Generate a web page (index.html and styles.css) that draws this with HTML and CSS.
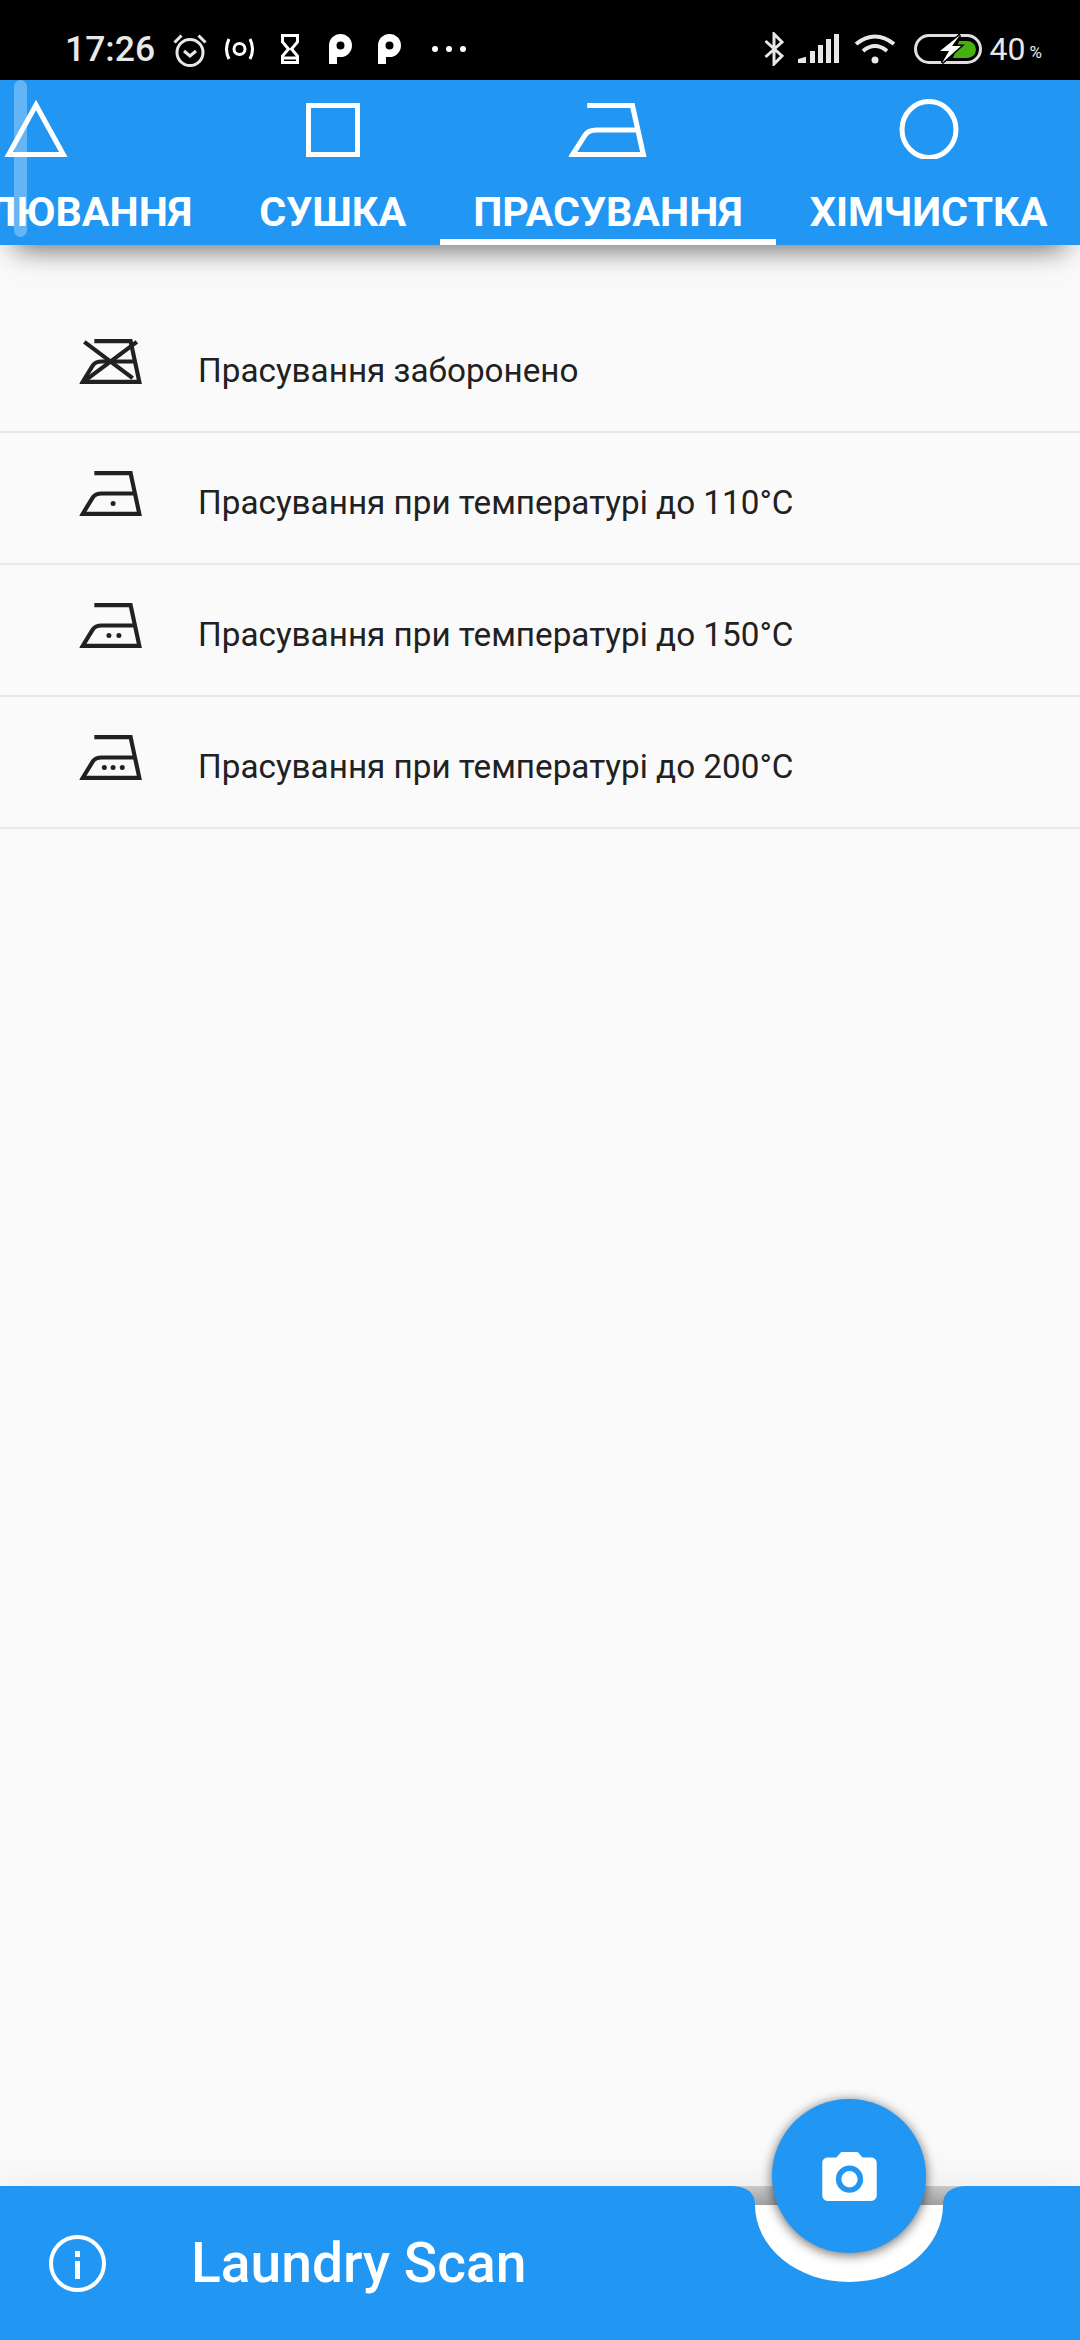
FILE: index.html
```html
<!DOCTYPE html>
<html lang="uk">
<head>
  <meta charset="UTF-8"/>
  <meta name="viewport" content="width=device-width, initial-scale=1.0"/>
  <title>Laundry Scan</title>
  <link rel="stylesheet" href="styles.css">
</head>
<body>
  <svg class="defs" width="0" height="0">
    <symbol id="iron" viewBox="0 0 76 54" preserveAspectRatio="none">
      <path d="M18 2.5H61.5L72 51.5H4L16 32Q19 27 27 27H67" fill="none" stroke="currentColor" stroke-width="5"/>
    </symbol>
  </svg>
  <div class="app">
    <div class="statusbar">
      <div class="status-left">
        <span class="time">17:26</span>
        <svg class="st-alarm" viewBox="0 0 34 34" fill="none" stroke="#e8e8e8" stroke-width="3">
          <circle cx="17" cy="19.5" r="13"/>
          <path d="M11 18l6 5 6-5M1.5 9.5L8.5 2.5M25.5 2.5L32.5 9.5"/>
        </svg>
        <svg class="st-cast" viewBox="0 0 29 22" fill="none" stroke="#fff" stroke-width="3">
          <circle cx="14.500" cy="11" r="5.500"/>
          <path d="M4 1Q-1 11 4 21M25 1Q30 11 25 21"/>
        </svg>
        <svg class="st-glass" viewBox="0 0 18 30" fill="none" stroke="#fff" stroke-width="3">
          <path d="M1.500 1.500H16.500V8L10.500 15L16.500 22V28.500H1.500V22L7.500 15L1.500 8ZM1.500 24H16.500"/>
        </svg>
        <svg class="st-p" viewBox="0 0 23 30" fill="#fff">
          <path d="M0 30V11.500A11.500 11.500 0 1 1 11.500 23H8V30ZM11.500 7.500A4 4 0 1 0 11.500 15.500A4 4 0 1 0 11.500 7.500Z" fill-rule="evenodd"/>
        </svg>
        <svg class="st-p st-p2" viewBox="0 0 23 30" fill="#fff">
          <path d="M0 30V11.500A11.500 11.500 0 1 1 11.500 23H8V30ZM11.500 7.500A4 4 0 1 0 11.500 15.500A4 4 0 1 0 11.500 7.500Z" fill-rule="evenodd"/>
        </svg>
        <svg class="st-dots" viewBox="0 0 34 6" fill="#fff">
          <circle cx="3" cy="3" r="3"/>
          <circle cx="17" cy="3" r="3"/>
          <circle cx="31" cy="3" r="3"/>
        </svg>
      </div>
      <div class="status-right">
        <svg class="st-bt" viewBox="0 0 20 34" fill="none" stroke="#e8e8e8" stroke-width="3">
          <path d="M1.500 9L18 24L10 32V2L18 10L1.500 25"/>
        </svg>
        <svg class="st-signal" viewBox="0 0 41 29" fill="#e8e8e8">
          <path d="M0 29V25L8 22.700V29Z"/>
          <rect x="12" y="17" width="5" height="12"/>
          <rect x="20" y="11" width="5" height="18"/>
          <rect x="28" y="5" width="5" height="24"/>
          <rect x="36" y="0" width="5" height="29"/>
        </svg>
        <svg class="st-wifi" viewBox="0 0 42 30" fill="none" stroke="#e8e8e8" stroke-width="4">
          <path d="M2 10Q21 -5 40 10M9 17Q21 7 33 17"/>
          <circle cx="21" cy="26" r="3.500" fill="#e8e8e8" stroke="none"/>
        </svg>
        <svg class="st-batt" viewBox="0 0 68 30">
          <rect x="1.500" y="1.500" width="65" height="27" rx="13.500" fill="none" stroke="#e0e0e0" stroke-width="3"/>
          <path d="M45 7H53.500A8.500 8.500 0 0 1 53.500 24H39Z" fill="#46b010"/>
          <path d="M46 1L26 17H35L28 29L47 12H38Z" fill="#fff" stroke="#000" stroke-width="3" paint-order="stroke"/>
        </svg>
        <span class="batt-num">40</span>
        <span class="batt-pct">%</span>
      </div>
    </div>

    <div class="tabbar">
      <div class="tabs">
        <div class="tab">
          <svg class="tab-icon" viewBox="0 0 100 60" fill="none" stroke="#fff" stroke-width="5">
            <path d="M50 6L77.300 55.500H22.700Z"/>
          </svg>
          <span class="tab-label">Відбілювання</span>
        </div>
        <div class="tab">
          <svg class="tab-icon" viewBox="0 0 100 60" fill="none" stroke="#fff" stroke-width="5">
            <rect x="25.500" y="6.500" width="49" height="49"/>
          </svg>
          <span class="tab-label">Сушка</span>
        </div>
        <div class="tab active">
          <svg class="tab-icon" viewBox="0 0 100 60">
            <use href="#iron" x="10.500" y="4" width="79" height="54"/>
          </svg>
          <span class="tab-label">Прасування</span>
        </div>
        <div class="tab">
          <svg class="tab-icon" viewBox="0 0 100 60" fill="none" stroke="#fff" stroke-width="5">
            <ellipse cx="50" cy="30.500" rx="27" ry="28"/>
          </svg>
          <span class="tab-label">Хімчистка</span>
        </div>
      </div>
      <div class="scroll-thumb"></div>
    </div>

    <ul class="list">
      <li class="row">
        <svg class="row-icon" viewBox="0 0 76 54">
          <use href="#iron" width="76" height="54"/>
          <path d="M6 3.500L64 47M69 3.500L8 49" stroke="currentColor" stroke-width="5" fill="none"/>
        </svg>
        <span class="row-text">Прасування заборонено</span>
      </li>
      <li class="row">
        <svg class="row-icon" viewBox="0 0 76 54">
          <use href="#iron" width="76" height="54"/>
          <circle cx="40.500" cy="39" r="3" fill="currentColor"/>
        </svg>
        <span class="row-text">Прасування при температурі до 110°C</span>
      </li>
      <li class="row">
        <svg class="row-icon" viewBox="0 0 76 54">
          <use href="#iron" width="76" height="54"/>
          <circle cx="35.500" cy="39" r="3" fill="currentColor"/>
          <circle cx="47.500" cy="39" r="3" fill="currentColor"/>
        </svg>
        <span class="row-text">Прасування при температурі до 150°C</span>
      </li>
      <li class="row">
        <svg class="row-icon" viewBox="0 0 76 54">
          <use href="#iron" width="76" height="54"/>
          <circle cx="30" cy="39" r="3" fill="currentColor"/>
          <circle cx="40.500" cy="39" r="3" fill="currentColor"/>
          <circle cx="51.500" cy="39" r="3" fill="currentColor"/>
        </svg>
        <span class="row-text">Прасування при температурі до 200°C</span>
      </li>
    </ul>

    <div class="bottombar">
      <svg class="info-icon" viewBox="0 0 57 57" fill="none" stroke="#fff">
        <circle cx="28.500" cy="28.500" r="26.500" stroke-width="4"/>
        <path d="M28.500 26V44" stroke-width="5"/>
        <path d="M28.500 16V22" stroke-width="5"/>
      </svg>
      <span class="app-name">Laundry Scan</span>
      <svg class="notch" viewBox="0 0 260 110">
        <defs>
          <linearGradient id="notch-shade" x1="0" y1="0" x2="0" y2="1">
            <stop offset="0" stop-color="#c8c8c8"/>
            <stop offset="1" stop-color="#a0a0a0"/>
          </linearGradient>
        </defs>
        <path d="M10 0Q35 0 35 19H223Q223 0 248 0Z" fill="url(#notch-shade)"/>
        <path d="M35 19A94 77 0 0 0 223 19Z" fill="#fff"/>
      </svg>
      <button class="fab">
        <svg class="fab-icon" viewBox="2 2 20 18">
          <path d="M9 2L7.170 4H4C2.900 4 2 4.900 2 6V18C2 19.100 2.900 20 4 20H20C21.100 20 22 19.100 22 18V6C22 4.900 21.100 4 20 4H16.830L15 2Z" fill="#fff"/>
          <circle cx="12" cy="12" r="4" fill="#fff" stroke="#2196f3" stroke-width="2"/>
        </svg>
      </button>
    </div>
  </div>
</body>
</html>
```
FILE: styles.css
```css
* {
  margin: 0;
  padding: 0;
  box-sizing: border-box;
}
body {
  width: 1080px;
  height: 2340px;
  overflow: hidden;
  background: #fafafa;
  font-family: Roboto, sans-serif;
  color: #212121;
}
.defs {
  display: block;
  height: 0;
}
.app {
  height: 2340px;
  display: flex;
  flex-direction: column;
}
.statusbar {
  height: 80px;
  flex: none;
  background: #000;
  display: flex;
  justify-content: space-between;
  padding: 0 38px 0 65px;
}
.status-left,
.status-right {
  display: flex;
  align-items: flex-start;
}
.status-left svg,
.status-right svg {
  flex: none;
  display: block;
}
.time {
  font-size: 35.5px;
  font-weight: 500;
  line-height: 40px;
  margin-top: 29px;
  color: #e8e8e8;
}
.st-alarm { width: 34px; height: 34px; margin: 33px 0 0 18px; }
.st-cast { width: 29px; height: 22px; margin: 38px 0 0 18px; }
.st-glass { width: 18px; height: 30px; margin: 34px 0 0 27px; }
.st-p { width: 23px; height: 30px; margin: 34px 0 0 30px; }
.status-left .st-p2 { margin-left: 26px; }
.st-dots { width: 34px; height: 6px; margin: 46px 0 0 31px; }
.st-bt { width: 20px; height: 34px; margin-top: 32px; }
.st-signal { width: 41px; height: 29px; margin: 34px 0 0 14px; }
.st-wifi { width: 42px; height: 30px; margin: 34px 0 0 15px; }
.st-batt { width: 68px; height: 30px; margin: 34px 0 0 18px; }
.batt-num {
  font-size: 32px;
  line-height: 38px;
  margin: 30px 0 0 8px;
  color: #e8e8e8;
}
.batt-pct {
  font-size: 17px;
  line-height: 20px;
  margin: 42px 0 0 4px;
  color: #e8e8e8;
}
.tabbar {
  height: 165px;
  flex: none;
  position: relative;
  background: #2196f3;
  box-shadow: 0 20px 26px -16px rgba(0, 0, 0, 0.55), 0 4px 30px rgba(0, 0, 0, 0.05);
  z-index: 2;
}
.tabs {
  display: flex;
  height: 165px;
  margin-left: -154px;
}
.tab {
  flex: none;
  display: flex;
  flex-direction: column;
  align-items: center;
  height: 165px;
  padding: 19px 33.5px 0;
  border-bottom: 6px solid transparent;
  color: #fff;
}
.tab.active {
  border-bottom-color: #fff;
}
.tab-icon {
  width: 100px;
  height: 60px;
  flex: none;
  margin-bottom: 29px;
}
.tab-label {
  font-size: 41.25px;
  font-weight: 700;
  line-height: 48px;
  text-transform: uppercase;
  white-space: nowrap;
}
.scroll-thumb {
  position: absolute;
  left: 14px;
  top: 0;
  width: 13px;
  height: 157px;
  border-radius: 7px;
  background: rgba(255, 255, 255, 0.3);
}
.list {
  flex: 1;
  list-style: none;
  padding-top: 56px;
}
.row {
  height: 132px;
  display: flex;
  align-items: flex-start;
  padding: 38px 0 0 79px;
  border-bottom: 2px solid #e8e8e8;
}
.row-icon {
  width: 64px;
  height: 45px;
  flex: none;
  color: #212121;
}
.row-text {
  font-size: 33.25px;
  line-height: 38px;
  margin: 13px 0 0 55px;
}
.bottombar {
  height: 154px;
  flex: none;
  position: relative;
  background: #2196f3;
  display: flex;
  align-items: center;
  padding-left: 49px;
  gap: 85px;
  box-shadow: 0 0 40px rgba(0, 0, 0, 0.07);
}
.info-icon {
  width: 57px;
  height: 57px;
  flex: none;
}
.app-name {
  font-size: 55.2px;
  font-weight: 500;
  line-height: 64px;
  color: #fff;
}
.notch {
  position: absolute;
  left: 720px;
  top: 0;
  width: 260px;
  height: 110px;
}
.fab {
  position: absolute;
  left: 772px;
  top: -87px;
  width: 154px;
  height: 154px;
  border: none;
  border-radius: 50%;
  background: #2196f3;
  box-shadow: 0 2px 12px rgba(0, 0, 0, 0.6);
  display: flex;
  align-items: center;
  justify-content: center;
}
.fab-icon {
  width: 55px;
  height: 49px;
}
```
